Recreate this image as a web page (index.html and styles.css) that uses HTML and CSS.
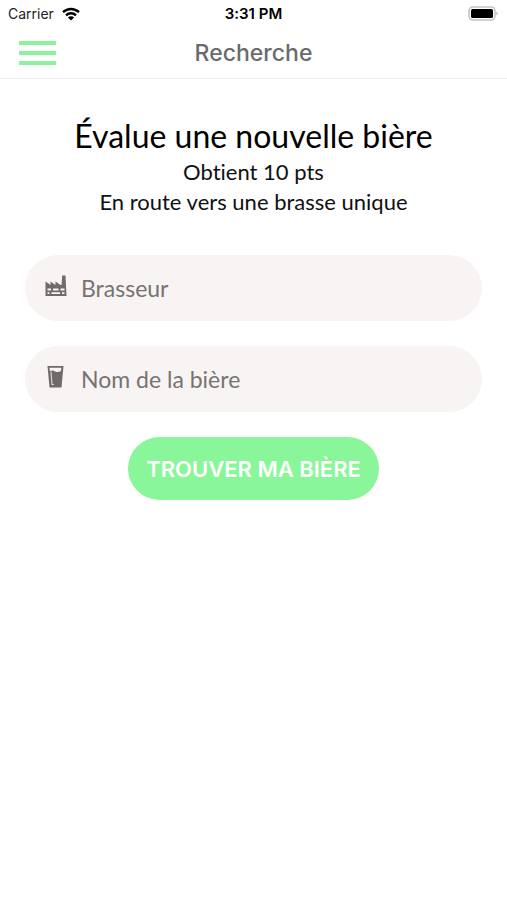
FILE: index.html
```html
<!DOCTYPE html>
<html lang="fr">
<head>
<meta charset="utf-8">
<meta name="viewport" content="width=device-width, initial-scale=1">
<title>Recherche</title>
<link rel="stylesheet" href="styles.css">
</head>
<body>
<div class="status">
  <div class="carrier">
    <span>Carrier</span>
    <svg class="wifi" viewBox="0 0 18 14" aria-hidden="true">
      <path d="M1 5.2a11.6 11.6 0 0 1 16 0M4 8.3a7.2 7.2 0 0 1 10 0" fill="none" stroke="#000" stroke-width="2.4"/>
      <path d="M9 13.6 5.9 10.6a4.4 4.4 0 0 1 6.2 0z"/>
    </svg>
  </div>
  <time class="clock">3:31 PM</time>
  <svg class="battery" viewBox="0 0 31 16" aria-hidden="true">
    <rect x="1" y="1" width="26" height="13" rx="4" fill="#fff" stroke="#c4c4c4" stroke-width="1.6"/>
    <rect x="3" y="3" width="22" height="9" rx="1.5"/>
    <path d="M28.5 5.5a2.4 2.4 0 0 1 0 4z" fill="#a8a8a8"/>
  </svg>
</div>
<header class="navbar">
  <button class="menu" type="button" aria-label="Menu">
    <span class="bar"></span><span class="bar"></span><span class="bar"></span>
  </button>
  <h1 class="title">Recherche</h1>
</header>
<main class="content">
  <h2 class="headline">Évalue une nouvelle bière</h2>
  <p class="lead">Obtient 10 pts</p>
  <p class="lead">En route vers une brasse unique</p>
  <form class="form">
    <label class="field">
      <svg class="icon" viewBox="0 0 22 22" aria-hidden="true">
        <path fill="#6f6b69" fill-rule="evenodd" d="M.5 6.500 5.500 10V6.500L10.500 10V6.500L15.500 10H16.500L17.200.5H20.500L21.500 21H.5zM2.500 13.500v2H6v-2zM8 13.500v2h5.500v-2zM15.500 13.500v2h4v-2zM2.500 17.300v1.800H4.500v-1.800zM6.500 17.300v1.800h8.500v-1.800zM17 17.300v1.800h2.500v-1.800z"/>
      </svg>
      <input class="input" type="text" placeholder="Brasseur" aria-label="Brasseur">
    </label>
    <label class="field">
      <svg class="icon" viewBox="0 0 22 22" aria-hidden="true">
        <path fill="#6f6b69" fill-rule="evenodd" d="M2.500 0h16L16.500 21.500H4.500zM4.500 1.800l.4 3.400c2-1.200 3.600-.6 5.300.2 2 .9 3.800.6 5.700-.5L16.400 1.800z"/>
        <path d="M6 5.500 7 18.500H9" fill="none" stroke="#d8d4d2" stroke-width="1.200"/>
      </svg>
      <input class="input" type="text" placeholder="Nom de la bière" aria-label="Nom de la bière">
    </label>
    <button class="submit" type="button">TROUVER MA BIÈRE</button>
  </form>
</main>
</body>
</html>
```
FILE: styles.css
```css
* {
  box-sizing: border-box;
}

body {
  margin: 0;
  background: #fff;
  color: #111;
  font-family: Lato, "Open Sans", sans-serif;
  font-variant-ligatures: none;
}

.status,
.navbar {
  display: grid;
  grid-template-columns: 1fr auto 1fr;
  align-items: center;
  font-family: Inter, "Liberation Sans", sans-serif;
}

.status {
  height: 27px;
  padding: 0 8px;
  color: #000;
  font-size: 14px;
}

.carrier {
  display: flex;
  align-items: center;
  gap: 8px;
  color: #222;
}

.wifi {
  width: 18px;
  height: 14px;
}

.clock {
  font-size: 15px;
  font-weight: 600;
}

.battery {
  justify-self: end;
  width: 31px;
  height: 16px;
}

.navbar {
  height: 52px;
  padding: 0 19px;
  border-bottom: 1px solid #f0f0f0;
}

.menu {
  display: flex;
  flex-direction: column;
  gap: 6px;
  width: 37px;
  padding: 0;
  border: 0;
  background: none;
}

.bar {
  width: 100%;
  height: 4px;
  background: #8df29c;
}

.title {
  margin: 0;
  color: #6b6b6b;
  font-size: 23px;
  font-weight: 500;
}

.content {
  padding: 36px 25px;
  text-align: center;
}

.headline {
  margin: 0;
  color: #000;
  font-size: 32px;
  font-weight: 400;
  line-height: 42px;
}

.lead {
  margin: 0;
  font-size: 22px;
  line-height: 30px;
}

.form {
  display: flex;
  flex-direction: column;
  align-items: center;
  gap: 25px;
  margin-top: 38px;
}

.field {
  display: flex;
  align-items: center;
  gap: 14px;
  width: 100%;
  height: 66px;
  padding: 0 20px;
  border-radius: 33px;
  background: #f7f4f3;
}

.icon {
  flex: none;
  width: 22px;
  height: 22px;
  margin-bottom: 4px;
}

.input {
  flex: 1;
  min-width: 0;
  padding: 0;
  border: 0;
  outline: 0;
  background: none;
  color: #111;
  font: 23px/30px Lato, "Open Sans", sans-serif;
}

.input::placeholder {
  color: #777372;
  opacity: 1;
}

.submit {
  height: 63px;
  padding: 0 18px;
  border: 0;
  border-radius: 32px;
  background: #8af69a;
  color: #fff;
  font: 600 22px/30px Inter, "Liberation Sans", sans-serif;
}
```
